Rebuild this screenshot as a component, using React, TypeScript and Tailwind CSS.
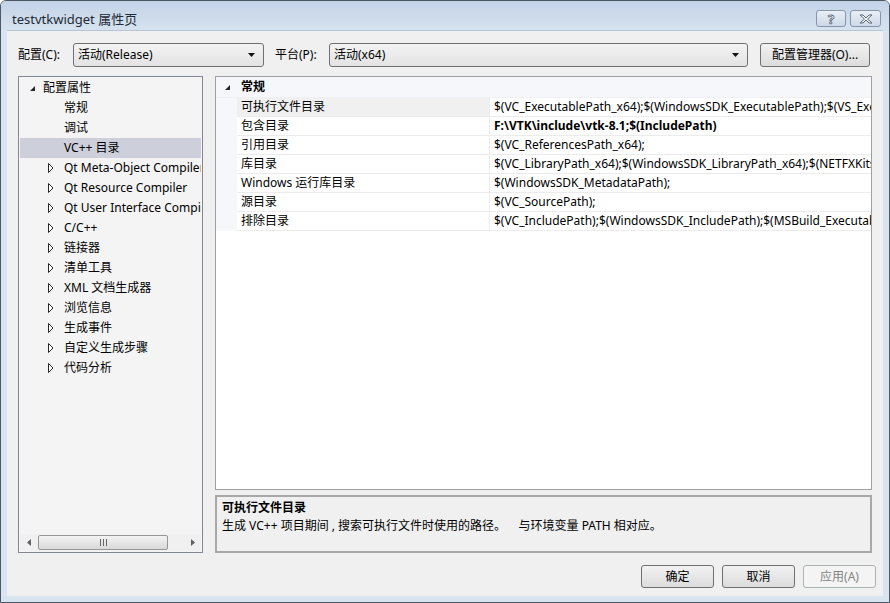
import React from "react";

type TreeItem = { label: string; level: 0 | 1; expander?: "open" | "closed"; selected?: boolean };

const tree: TreeItem[] = [
  { label: "配置属性", level: 0, expander: "open" },
  { label: "常规", level: 1 },
  { label: "调试", level: 1 },
  { label: "VC++ 目录", level: 1, selected: true },
  { label: "Qt Meta-Object Compiler", level: 1, expander: "closed" },
  { label: "Qt Resource Compiler", level: 1, expander: "closed" },
  { label: "Qt User Interface Compiler", level: 1, expander: "closed" },
  { label: "C/C++", level: 1, expander: "closed" },
  { label: "链接器", level: 1, expander: "closed" },
  { label: "清单工具", level: 1, expander: "closed" },
  { label: "XML 文档生成器", level: 1, expander: "closed" },
  { label: "浏览信息", level: 1, expander: "closed" },
  { label: "生成事件", level: 1, expander: "closed" },
  { label: "自定义生成步骤", level: 1, expander: "closed" },
  { label: "代码分析", level: 1, expander: "closed" },
];

const props = [
  { name: "可执行文件目录", value: "$(VC_ExecutablePath_x64);$(WindowsSDK_ExecutablePath);$(VS_ExecutablePath);$(MSBuild_ExecutablePath)" },
  { name: "包含目录", value: "F:\\VTK\\include\\vtk-8.1;$(IncludePath)", bold: true },
  { name: "引用目录", value: "$(VC_ReferencesPath_x64);" },
  { name: "库目录", value: "$(VC_LibraryPath_x64);$(WindowsSDK_LibraryPath_x64);$(NETFXKitsDir)Lib\\um\\x64" },
  { name: "Windows 运行库目录", value: "$(WindowsSDK_MetadataPath);" },
  { name: "源目录", value: "$(VC_SourcePath);" },
  { name: "排除目录", value: "$(VC_IncludePath);$(WindowsSDK_IncludePath);$(MSBuild_ExecutablePath);$(VC_LibraryPath_x64)" },
];

function OpenArrow() {
  return (
    <svg width="7" height="7" viewBox="0 0 7 7">
      <path d="M6 1 L6 6 L1 6 Z" fill="#262626" />
    </svg>
  );
}

function ClosedArrow() {
  return (
    <svg width="6" height="10" viewBox="0 0 6 10">
      <path d="M0.5 0.5 L5 5 L0.5 9.5 Z" fill="#fff" stroke="#262626" strokeWidth="1" />
    </svg>
  );
}

function Combo({ text, width }: { text: string; width: string }) {
  return (
    <div className={`${width} h-[24px] flex items-center justify-between pl-[4px] pr-[8px] border border-[#707070] rounded-[3px] bg-gradient-to-b from-[#f3f3f3] to-[#e3e3e3]`}>
      <span>{text}</span>
      <svg width="7" height="4" viewBox="0 0 7 4">
        <path d="M0 0 L7 0 L3.5 4 Z" fill="#111" />
      </svg>
    </div>
  );
}

function Button({ label, disabled }: { label: string; disabled?: boolean }) {
  return (
    <div
      className={
        disabled
          ? "w-[73px] h-[23px] flex items-center justify-center border border-[#adb2b5] rounded-[3px] bg-[#f4f4f4] text-[#838383]"
          : "w-[73px] h-[23px] flex items-center justify-center border border-[#707070] rounded-[3px] bg-gradient-to-b from-[#f2f2f2] to-[#dcdcdc]"
      }
    >
      {label}
    </div>
  );
}

export default function App() {
  return (
    <div className="w-[890px] h-[603px] flex flex-col bg-[#d9e4f1] border border-[#4d5866] rounded-t-[6px] overflow-hidden text-[12px] leading-[16px] text-[#000] font-['Noto_Sans','Noto_Sans_CJK_SC',sans-serif]">
      {/* title bar */}
      <div className="h-[29px] shrink-0 flex items-start justify-between bg-gradient-to-b from-[#c3d3e6] to-[#d6e2ef]">
        <div className="pl-[11px] pt-[9px] text-[13px] leading-[18px] text-[#1e2a36]">testvtkwidget 属性页</div>
        <div className="flex gap-[4px] pt-[9px] pr-[8px]">
          <div className="w-[30px] h-[17px] flex items-center justify-center border border-[#8596ab] rounded-[3px] bg-gradient-to-b from-[#e9eff6] to-[#cdd9e7] text-[13px] font-bold text-white [-webkit-text-stroke:0.8px_#56667a]">
            ?
          </div>
          <div className="w-[31px] h-[17px] flex items-center justify-center border border-[#8596ab] rounded-[3px] bg-gradient-to-b from-[#e9eff6] to-[#cdd9e7]">
            <svg width="14" height="10" viewBox="0 0 14 10">
              <path d="M1 1 L4 1 L7 4 L10 1 L13 1 L8.5 5 L13 9 L10 9 L7 6 L4 9 L1 9 L5.5 5 Z" fill="#fff" stroke="#56667a" strokeWidth="1" strokeLinejoin="round" />
            </svg>
          </div>
        </div>
      </div>

      {/* client */}
      <div className="flex-1 mx-[6px] mb-[6px] bg-[#f0f0f0] border-t border-[#b7c4d3] flex flex-col pt-[12px] pl-[11px] pr-[11px]">
        {/* config row */}
        <div className="h-[24px] flex items-center">
          <span className="w-[55px]">配置(C):</span>
          <Combo text="活动(Release)" width="w-[191px]" />
          <span className="ml-[11px] w-[54px]">平台(P):</span>
          <Combo text="活动(x64)" width="w-[419px]" />
          <div className="ml-[12px] w-[110px] h-[24px] flex items-center justify-center border border-[#707070] rounded-[3px] bg-gradient-to-b from-[#f2f2f2] to-[#dcdcdc]">
            配置管理器(O)...
          </div>
        </div>

        {/* main */}
        <div className="mt-[9px] h-[477px] flex gap-[12px]">
          {/* tree */}
          <div className="w-[185px] border border-[#828790] bg-[#f4f4f4] flex flex-col">
            <div className="flex-1 pt-[1px] overflow-hidden">
              {tree.map((t) => (
                <div
                  key={t.label}
                  className={`h-[20px] mx-[1px] flex items-center whitespace-nowrap overflow-hidden ${t.selected ? "bg-[#cdcfdb]" : ""}`}
                >
                  {t.level === 0 ? (
                    <>
                      <span className="w-[10px] shrink-0 ml-[9px] flex"><OpenArrow /></span>
                      <span className="ml-[4px]">{t.label}</span>
                    </>
                  ) : (
                    <>
                      <span className="w-[16px] shrink-0 ml-[28px] flex">{t.expander === "closed" ? <ClosedArrow /> : null}</span>
                      <span>{t.label}</span>
                    </>
                  )}
                </div>
              ))}
            </div>
            {/* h scrollbar */}
            <div className="h-[17px] mb-[1px] mx-[1px] flex items-center bg-[#f0f0f0]">
              <div className="w-[18px] flex justify-center">
                <svg width="4" height="7" viewBox="0 0 4 7"><path d="M4 0 L0 3.5 L4 7 Z" fill="#606060" /></svg>
              </div>
              <div className="w-[130px] h-[15px] border border-[#979797] rounded-[2px] bg-gradient-to-b from-[#f3f3f3] to-[#d9d9d9] flex items-center justify-center gap-[2px]">
                <span className="w-[1px] h-[7px] bg-[#666]" />
                <span className="w-[1px] h-[7px] bg-[#666]" />
                <span className="w-[1px] h-[7px] bg-[#666]" />
              </div>
              <div className="flex-1" />
              <div className="w-[17px] flex justify-center">
                <svg width="4" height="7" viewBox="0 0 4 7"><path d="M0 0 L4 3.5 L0 7 Z" fill="#606060" /></svg>
              </div>
            </div>
          </div>

          {/* right column */}
          <div className="w-[657px] flex flex-col gap-[5px]">
            <div className="h-[414px] border border-[#a0a0a0] bg-white overflow-hidden">
              <div className="h-[21px] flex items-center bg-[#f5f7fa] border-b border-[#eef0f3]">
                <span className="w-[21px] pl-[8px] flex"><OpenArrow /></span>
                <span className="ml-[4px] font-bold">常规</span>
              </div>
              {props.map((p, i) => (
                <div key={p.name} className="h-[19px] flex bg-[#f5f7fa]">
                  <div className={`w-[252px] ml-[21px] pl-[4px] flex items-center border-b border-[#ececec] whitespace-nowrap ${i === 0 ? "bg-[#f0f0f0]" : "bg-white"}`}>
                    {p.name}
                  </div>
                  <div className={`flex-1 pl-[4px] flex items-center border-b border-l border-[#ececec] bg-white whitespace-nowrap overflow-hidden ${p.bold ? "font-bold" : ""}`}>
                    {p.value}
                  </div>
                </div>
              ))}
            </div>
            <div className="h-[58px] border-2 border-[#a8a8a8] bg-[#f0f0f0] px-[5px] pt-[2px]">
              <div className="h-[18px] flex items-center font-bold">可执行文件目录</div>
              <div className="h-[18px] flex items-center whitespace-pre">
                生成 VC++ 项目期间 , 搜索可执行文件时使用的路径。    与环境变量 PATH 相对应。
              </div>
            </div>
          </div>
        </div>

        {/* buttons */}
        <div className="mt-[12px] h-[23px] flex justify-end gap-[8px] -mr-[4px]">
          <Button label="确定" />
          <Button label="取消" />
          <Button label="应用(A)" disabled />
        </div>
      </div>
    </div>
  );
}
